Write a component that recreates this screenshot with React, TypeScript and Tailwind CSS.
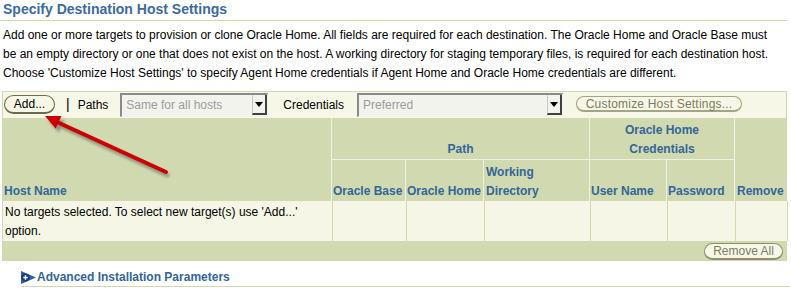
import React from "react";

function DropArrow() {
  return (
    <div className="flex h-[20px] w-[15px] items-center justify-center border-l border-l-[#c8c8c8] border-r-2 border-b-2 border-r-[#404040] border-b-[#404040] bg-[#f3f3ee]">
      <svg width="8" height="5" viewBox="0 0 8 5">
        <polygon points="0,0 8,0 4,5" fill="#000" />
      </svg>
    </div>
  );
}

function Select({ value, className }: { value: string; className: string }) {
  return (
    <div
      className={
        "flex h-[24px] items-start border-t-2 border-l-2 border-t-[#8a8a8a] border-l-[#8a8a8a] border-b border-r border-b-[#f2f2f2] border-r-[#f2f2f2] bg-[#f3f3ee] " +
        className
      }
    >
      <span className="flex-1 pl-[4px] text-[12px] leading-[20px] text-[#9c9c9c]">{value}</span>
      <DropArrow />
    </div>
  );
}

function PillButton({ label, className }: { label: string; className: string }) {
  return (
    <div
      className={
        "flex items-center justify-center rounded-full border border-b-2 bg-[#f7f7e7] text-[12px] " + className
      }
    >
      {label}
    </div>
  );
}

const head = "text-[12px] font-bold leading-[19px] text-[#336699]";

export default function App() {
  return (
    <div
      className="relative h-[292px] w-[791px] overflow-hidden bg-white text-black"
      style={{ fontFamily: '"Liberation Sans", Arial, sans-serif' }}
    >
      {/* Section title */}
      <div className="mr-[4px] h-[21px] border-b border-[#d1d9b0] pl-[3px] pt-[1px] text-[14px] font-bold leading-[17px] text-[#3a6b9f]">
        Specify Destination Host Settings
      </div>

      <p className="mt-[5px] pl-[3px] text-[12px] leading-[19px]">
        Add one or more targets to provision or clone Oracle Home. All fields are required for each destination. The Oracle Home and Oracle Base must
        <br />
        be an empty directory or one that does not exist on the host. A working directory for staging temporary files, is required for each destination host.
        <br />
        Choose 'Customize Host Settings' to specify Agent Home credentials if Agent Home and Oracle Home credentials are different.
      </p>

      {/* Table block */}
      <div className="ml-[2px] mt-[8px] w-[785px]">
        {/* Toolbar */}
        <div className="flex h-[27px] items-start border-t border-l border-r border-[#d1d9b0] bg-[#f7f7e7]">
          <PillButton label="Add..." className="ml-[1px] mt-[3px] h-[19px] w-[51px] border-[#6b6b4b]" />
          <span className="ml-[11px] mt-[3px] text-[14px] leading-[19px]">|</span>
          <span className="ml-[8px] mt-[4px] text-[12px] leading-[19px]">Paths</span>
          <Select value="Same for all hosts" className="ml-[12px] mt-[1px] w-[148px]" />
          <span className="ml-[15px] mt-[4px] text-[12px] leading-[19px]">Credentials</span>
          <Select value="Preferred" className="ml-[13px] mt-[1px] w-[206px]" />
          <PillButton
            label="Customize Host Settings..."
            className="ml-[13px] mt-[4px] h-[16px] w-[166px] border-[#a4a486] text-[#7c7c5e] tracking-[0.2px]"
          />
        </div>

        {/* Header */}
        <div className="grid grid-cols-[329px_74px_78px_106px_77px_68px_53px] grid-rows-[41px_42px] bg-[#d1d9b0]">
          <div className={"row-span-2 flex items-end pl-[2px] " + head}>Host Name</div>
          <div className={"col-span-3 flex items-end justify-center border-l border-[#eff1df] " + head}>Path</div>
          <div className={"col-span-2 flex items-end justify-center border-l border-[#eff1df] text-center " + head}>
            Oracle Home
            <br />
            Credentials
          </div>
          <div className={"row-span-2 flex items-end border-l border-[#eff1df] pl-[2px] " + head}>Remove</div>
          <div className={"flex items-end border-l border-t border-[#eff1df] pl-[1px] " + head}>Oracle Base</div>
          <div className={"flex items-end border-l border-t border-[#eff1df] pl-[1px] " + head}>Oracle Home</div>
          <div className={"flex items-end border-l border-t border-[#eff1df] pl-[2px] " + head}>
            Working
            <br />
            Directory
          </div>
          <div className={"flex items-end border-l border-t border-[#eff1df] pl-[1px] " + head}>User Name</div>
          <div className={"flex items-end border-l border-t border-[#eff1df] pl-[1px] " + head}>Password</div>
        </div>

        {/* Body row */}
        <div className="grid h-[40px] grid-cols-[329px_74px_78px_106px_77px_68px_53px] border-l border-[#d1d9b0] bg-[#f5f6e6]">
          <div className="pl-[2px] pt-[2px] text-[12px] leading-[19px]">
            No targets selected. To select new target(s) use 'Add...'
            <br />
            option.
          </div>
          <div className="border-l border-[#d1d9b0]" />
          <div className="border-l border-[#d1d9b0]" />
          <div className="border-l border-[#d1d9b0]" />
          <div className="border-l border-[#d1d9b0]" />
          <div className="border-l border-[#d1d9b0]" />
          <div className="border-l border-r border-[#d1d9b0]" />
        </div>

        {/* Footer */}
        <div className="flex h-[20px] items-start justify-end bg-[#d1d9b0] pr-[4px]">
          <PillButton label="Remove All" className="mt-[2px] h-[17px] w-[79px] border-[#8e8e70] text-[#7c7c5e]" />
        </div>
      </div>

      {/* Advanced parameters */}
      <div className="ml-[21px] mt-[10px] mr-[1px] flex h-[16px] items-start border-b border-[#d1d9b0]">
        <svg width="15" height="13" viewBox="0 0 15 13">
          <polygon points="0,0 15,6.5 0,13" fill="#2f5f9e" />
          <circle cx="4.5" cy="6.5" r="4" fill="#1c3d78" />
          <path d="M2.3 6.5h4.4M4.5 4.3v4.4" stroke="#fff" strokeWidth="1.4" />
        </svg>
        <span className="pl-[1px] text-[12px] font-bold leading-[13px] text-[#336699]">
          Advanced Installation Parameters
        </span>
      </div>

      {/* Red annotation arrow */}
      <svg
        className="pointer-events-none absolute left-0 top-0"
        width="791"
        height="292"
        viewBox="0 0 791 292"
      >
        <defs>
          <filter id="sh" x="-20%" y="-20%" width="140%" height="140%">
            <feGaussianBlur stdDeviation="1.6" />
          </filter>
        </defs>
        <g transform="translate(3 4)" filter="url(#sh)" opacity="0.55">
          <line x1="58" y1="122" x2="166" y2="172" stroke="#555" strokeWidth="4" />
          <polygon points="45,116 61.5,116 55.7,128.6" fill="#555" />
        </g>
        <line x1="57" y1="122" x2="166" y2="172" stroke="#cc0000" strokeWidth="4" strokeLinecap="round" />
        <polygon points="45,116 61.5,116 55.7,128.6" fill="#cc0000" />
      </svg>
    </div>
  );
}
